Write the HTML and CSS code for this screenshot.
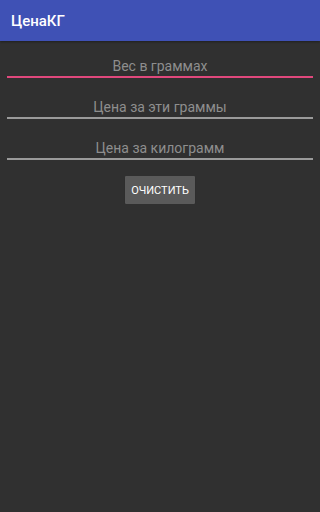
FILE: index.html
```html
<!DOCTYPE html>
<html lang="ru">
<head>
<meta charset="utf-8">
<title>ЦенаКГ</title>
<link rel="stylesheet" href="styles.css">
</head>
<body>
<header class="appbar"><span class="title">ЦенаКГ</span></header>
<main class="content">
  <div class="field focused"><span class="hint">Вес в граммах</span></div>
  <div class="field"><span class="hint">Цена за эти граммы</span></div>
  <div class="field"><span class="hint">Цена за килограмм</span></div>
  <div class="actions"><button class="btn">ОЧИСТИТЬ</button></div>
</main>
</body>
</html>
```
FILE: styles.css
```css
html, body {
  margin: 0;
  padding: 0;
  background: #303030;
  font-family: Roboto, "Noto Sans", sans-serif;
}
.appbar {
  height: 41px;
  background: #3f51b5;
  display: flex;
  align-items: center;
  padding-left: 11px;
  box-shadow: 0 1px 2px rgba(0,0,0,0.35);
}
.title {
  color: #ffffff;
  font-size: 15px;
  font-weight: 500;
  line-height: 18px;
  margin-top: 1px;
}
.content {
  padding: 0 7px;
  display: flex;
  flex-direction: column;
}
.field {
  height: 39px;
  border-bottom: 2px solid #9a9a9a;
  display: flex;
  align-items: flex-end;
  justify-content: center;
  box-sizing: content-box;
}
.field:first-child {
  margin-top: -4px;
}
.field.focused {
  border-bottom-color: #e0487c;
}
.hint {
  color: #8e8e8e;
  font-size: 14px;
  line-height: 16px;
  padding-bottom: 2px;
}
.actions {
  display: flex;
  justify-content: center;
  margin-top: 16px;
}
.btn {
  width: 70px;
  height: 28px;
  border: none;
  border-radius: 1px;
  background: #5a5a5a;
  color: #ffffff;
  font-family: Roboto, "Noto Sans", sans-serif;
  font-size: 11px;
  padding: 0;
  box-shadow: 0 1px 1px rgba(0,0,0,0.3);
}
```
